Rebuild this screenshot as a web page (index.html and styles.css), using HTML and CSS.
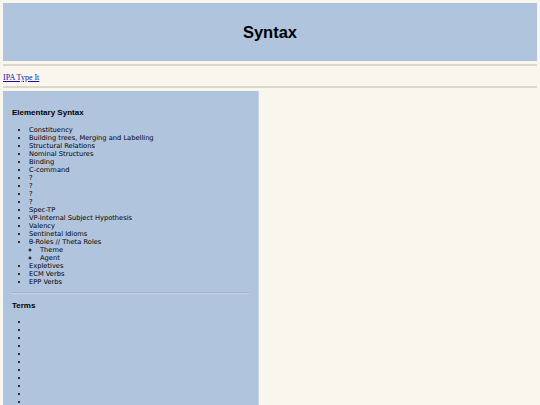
FILE: index.html
```html
<!DOCTYPE html>
<html lang="en">
<head>
  <meta charset="UTF-8">
  <meta name="viewport" content="width=device-width, initial-scale=1.0">
  <title>Syntax</title>
  <link rel="stylesheet" href="styles.css">
</head>
<body>
  <div class="header">
    <h1>Syntax</h1>
  </div>
  <hr class="rule">
  <p class="links"><a href="#">IPA Type It</a></p>
  <hr class="rule">

  <div class="sidebar">
    <h3>Elementary Syntax</h3>
    <ul>
      <li>Constituency</li>
      <li>Building trees, Merging and Labelling</li>
      <li>Structural Relations</li>
      <li>Nominal Structures</li>
      <li>Binding</li>
      <li>C-command</li>
      <li>?</li>
      <li>?</li>
      <li>?</li>
      <li>?</li>
      <li>Spec-TP</li>
      <li>VP-Internal Subject Hypothesis</li>
      <li>Valency</li>
      <li>Sentinetal Idioms</li>
      <li>θ-Roles // Theta Roles
        <ul>
          <li>Theme</li>
          <li>Agent</li>
        </ul>
      </li>
      <li>Expletives</li>
      <li>ECM Verbs</li>
      <li>EPP Verbs</li>
    </ul>
    <hr class="split">
    <h3>Terms</h3>
    <ul class="terms">
      <li>&nbsp;</li>
      <li>&nbsp;</li>
      <li>&nbsp;</li>
      <li>&nbsp;</li>
      <li>&nbsp;</li>
      <li>&nbsp;</li>
      <li>&nbsp;</li>
      <li>&nbsp;</li>
      <li>&nbsp;</li>
      <li>&nbsp;</li>
      <li>&nbsp;</li>
      <li>&nbsp;</li>
    </ul>
  </div>
</body>
</html>
```

FILE: styles.css
```css
body {
  margin: 3px;
  background-color: #f9f6ee;
  font-family: "Liberation Serif", serif;
  color: #000;
}
.header {
  background-color: #b0c4de;
  height: 58px;
  display: flex;
  align-items: center;
  justify-content: center;
}
h1 {
  margin: 0;
  font-family: "Liberation Sans", Arial, sans-serif;
  font-size: 16.5px;
  font-weight: bold;
}
.rule {
  margin: 3px 0 0;
  border: none;
  border-top: 2px solid #dad6ce;
  height: 0;
}
.links {
  margin: 0;
  padding: 7px 0 4px;
  font-size: 8px;
  line-height: 9px;
}
.links + .rule {
  margin-top: 0;
}
.links a {
  color: #1a0dab;
}
.sidebar {
  margin-top: 3px;
  width: 256px;
  background-color: #b0c4de;
  border-right: 1px solid #c8d5e8;
  padding: 17px 9px 0;
  box-sizing: border-box;
  font-family: "DejaVu Sans", Verdana, sans-serif;
}
h3 {
  margin: 0 0 8.5px;
  font-family: "Liberation Sans", Arial, sans-serif;
  font-size: 8px;
  line-height: 9px;
  font-weight: bold;
}
ul {
  margin: 0;
  padding-left: 17px;
  font-size: 6.7px;
  line-height: 8px;
}
ul ul {
  padding-left: 11px;
  list-style-type: circle;
}
.split {
  margin: 6px 0 7px;
  border: none;
  border-top: 1px solid #9fb2cc;
  border-bottom: 1px solid #c3d2e6;
  height: 0;
}
```
